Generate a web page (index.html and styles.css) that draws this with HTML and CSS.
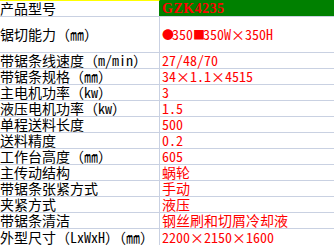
FILE: index.html
```html
<!DOCTYPE html>
<html lang="zh-CN">
<head>
<meta charset="utf-8">
<link rel="stylesheet" href="styles.css">
</head>
<body>
<div class="spec">
  <div class="row head"><div class="label">产品型号</div><div class="value model">GZK4235</div></div>
  <div class="row tall"><div class="label">锯切能力（㎜）</div><div class="value"><span class="dot">●</span>350<span class="sq">■</span>350W×350H</div></div>
  <div class="row"><div class="label">带锯条线速度（m/min）</div><div class="value">27/48/70</div></div>
  <div class="row"><div class="label">带锯条规格（㎜）</div><div class="value">34×1.1×4515</div></div>
  <div class="row"><div class="label">主电机功率（kw）</div><div class="value">3</div></div>
  <div class="row"><div class="label">液压电机功率（kw）</div><div class="value">1.5</div></div>
  <div class="row"><div class="label">单程送料长度</div><div class="value">500</div></div>
  <div class="row"><div class="label">送料精度</div><div class="value">0.2</div></div>
  <div class="row"><div class="label">工作台高度（㎜）</div><div class="value">605</div></div>
  <div class="row"><div class="label">主传动结构</div><div class="value">蜗轮</div></div>
  <div class="row"><div class="label">带锯条张紧方式</div><div class="value">手动</div></div>
  <div class="row"><div class="label">夹紧方式</div><div class="value">液压</div></div>
  <div class="row"><div class="label">带锯条清洁</div><div class="value">钢丝刷和切屑冷却液</div></div>
  <div class="row last"><div class="label">外型尺寸（LxWxH）（㎜）</div><div class="value">2200×2150×1600</div></div>
</div>
</body>
</html>
```

FILE: styles.css
```css
html, body {
  margin: 0;
  padding: 0;
  background: #ffffff;
}

.spec {
  width: 334px;
  font-family: "Noto Sans Mono CJK SC", "Noto Sans CJK SC", "Liberation Mono", monospace;
  font-size: 14px;
  line-height: 15px;
}

.row {
  display: grid;
  grid-template-columns: 160px 1fr;
  height: 16px;
  box-sizing: border-box;
  border-bottom: 1px solid #c9d1e2;
}

.label {
  box-sizing: border-box;
  border-right: 1px solid #c9d1e2;
  color: #000000;
  white-space: nowrap;
  display: flex;
  align-items: center;
}

.value {
  color: #ff0000;
  padding-left: 2px;
  white-space: nowrap;
  display: flex;
  align-items: center;
}

.head {
  height: 17px;
}

.head .label {
  border-top: 1px solid #ffff00;
  border-right-color: #008000;
}

.head .value.model {
  background: #008000;
  font-family: "Liberation Serif", "DejaVu Serif", serif;
  font-weight: bold;
  font-size: 14px;
  letter-spacing: 0.5px;
}

.tall {
  height: 36px;
}

.last {
  border-bottom: none;
  height: 17px;
}

.dot, .sq {
  display: inline-block;
  width: 10px;
  font-size: 12px;
}
```
